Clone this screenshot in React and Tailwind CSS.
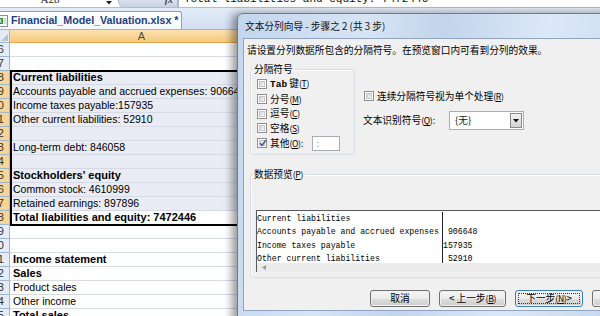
import React from "react";

const rows = [
  { n: 16, t: "" },
  { n: 17, t: "" },
  { n: 18, t: "Current liabilities", b: true, s: true, f: true },
  { n: 19, t: "Accounts payable and accrued expenses: 906648", s: true, f: true },
  { n: 20, t: "Income taxes payable:157935", s: true, f: true },
  { n: 21, t: "Other current liabilities: 52910", s: true, f: true },
  { n: 22, t: "", s: true, f: true },
  { n: 23, t: "Long-term debt: 846058", s: true, f: true },
  { n: 24, t: "", s: true, f: true },
  { n: 25, t: "Stockholders' equity", b: true, s: true, f: true },
  { n: 26, t: "Common stock: 4610999", s: true, f: true },
  { n: 27, t: "Retained earnings: 897896", s: true, f: true },
  { n: 28, t: "Total liabilities and equity: 7472446", b: true, s: true },
  { n: 29, t: "" },
  { n: 30, t: "" },
  { n: 31, t: "Income statement", b: true },
  { n: 32, t: "Sales", b: true },
  { n: 33, t: "Product sales" },
  { n: 34, t: "Other income" },
  { n: 35, t: "Total sales", b: true },
];

const preview = [
  ["Current liabilities", ""],
  ["Accounts payable and accrued expenses", " 906648"],
  ["Income taxes payable", "157935"],
  ["Other current liabilities", " 52910"],
];

function Check({ checked }) {
  return (
    <span className="relative block w-[10px] h-[10px] shrink-0 border border-[#8e8f8f] bg-white p-[1px]">
      <span className="block w-full h-full border border-[#c4c4c4] bg-gradient-to-br from-[#d4d4d4] to-[#f7f7f7]" />
      {checked && (
        <svg className="absolute left-[1px] top-[0px]" width="8" height="8" viewBox="0 0 8 8">
          <path d="M1.2 4.2 L3.1 6.4 L6.9 1.2" fill="none" stroke="#3550a0" strokeWidth="1.4" />
        </svg>
      )}
    </span>
  );
}

function Acc({ c }) {
  return (
    <span className="text-[8.6px] tracking-[-0.3px]">
      (<span className="underline">{c}</span>)
    </span>
  );
}

function Btn({ children, className, focus }) {
  return (
    <div
      className={
        "h-[17px] rounded-[3px] border p-[1px] shrink-0 " +
        (focus ? "border-[#3c7fb1] " : "border-[#707070] ") +
        className
      }
    >
      <div
        className={
          "w-full h-full rounded-[2px] flex items-center justify-center text-[9.7px] text-black bg-[linear-gradient(#f4f4f4_0%,#ececec_50%,#dedede_50%,#d0d0d0_100%)] " +
          (focus ? "outline outline-1 outline-dotted outline-[#333] -outline-offset-[2px]" : "")
        }
      >
        {children}
      </div>
    </div>
  );
}

export default function App() {
  return (
    <div
      className="relative w-[600px] h-[316px] overflow-hidden bg-white"
      style={{ fontFamily: '"Liberation Sans", Arial, sans-serif' }}
    >
      {/* formula bar */}
      <div className="h-[8px] overflow-hidden bg-white border-b border-[#aebdd0]">
        <div className="flex h-[18px] -mt-[10px] items-center">
          <div
            className="w-[100px] h-full flex items-center justify-center text-[11px] text-[#222]"
            style={{ fontFamily: '"Liberation Serif", serif' }}
          >
            A28
          </div>
          <div className="w-[18px] h-full flex items-end justify-center pb-[3px]">
            <svg width="6" height="4" viewBox="0 0 6 4">
              <polygon points="0,0 6,0 3,3.5" fill="#222" />
            </svg>
          </div>
          <div className="w-[60px] h-full rounded-bl-[7px] border border-[#a6b6cb] bg-gradient-to-b from-[#eef2f8] to-[#c8d4e4] flex items-center justify-end pr-[4px]">
            <span className="italic font-bold text-[10px] text-[#444]" style={{ fontFamily: '"Liberation Serif", serif' }}>
              fx
            </span>
          </div>
          <div
            className="flex-1 h-full flex items-center pl-[5px] text-[11px] text-[#111] border-l border-[#a6b6cb] whitespace-nowrap"
            style={{ fontFamily: '"Liberation Mono", monospace' }}
          >
            Total liabilities and equity: 7472446
          </div>
        </div>
      </div>

      {/* tab bar */}
      <div className="h-[22px] bg-gradient-to-b from-[#e3ecf8] to-[#d2dff1] flex items-end border-b border-[#9eb6ce]">
        <div className="h-[18px] w-[182px] bg-gradient-to-b from-white to-[#f3f7fc] border-t border-r border-[#8aa2c6] rounded-tr-[3px] flex items-center">
          <svg className="-ml-[3px] mr-[3px]" width="11" height="12" viewBox="0 0 11 12">
            <rect x="1.5" y="0.5" width="9" height="11" fill="#fff" stroke="#8a8f99" />
            <rect x="0" y="3" width="6" height="6" fill="#2f8a3c" />
            <path d="M1.5 4 L4.5 8 M4.5 4 L1.5 8" stroke="#fff" strokeWidth="1" />
            <path d="M7 4 H9.5 M7 6 H9.5 M7 8 H9.5" stroke="#7fb27f" strokeWidth="0.8" />
          </svg>
          <span className="font-bold text-[10.7px] text-[#1d3f7d] whitespace-nowrap">Financial_Model_Valuation.xlsx *</span>
        </div>
      </div>

      {/* column headers */}
      <div className="flex h-[13px]">
        <div className="relative w-[10px] h-full bg-[#e4ecf7] border-r border-b border-[#9eb6ce]">
          <svg className="absolute right-[1px] bottom-[1px]" width="7" height="7" viewBox="0 0 7 7">
            <polygon points="7,0 7,7 0,7" fill="#b6c2d2" />
          </svg>
        </div>
        <div className="w-[264px] h-full bg-gradient-to-b from-[#fbe2b0] to-[#f5c97c] border-r border-b border-[#e9a54c] flex items-center justify-center text-[11px] text-[#4a4a4a]">
          A
        </div>
        <div className="flex-1 h-full bg-gradient-to-b from-[#f1f5fb] to-[#dde7f3] border-b border-[#9eb6ce]" />
      </div>

      {/* rows */}
      <div className="relative">
        {rows.map((r) => (
          <div key={r.n} className="flex h-[14px]">
            <div
              className={
                "w-[10px] h-full overflow-hidden flex items-center justify-end pr-[5px] text-[11px] text-[#333] border-r border-b border-[#9eb6ce] " +
                (r.s ? "bg-[#f7d596]" : "bg-[#e4ecf7]")
              }
            >
              {r.n}
            </div>
            <div
              className={
                "w-[264px] h-full flex items-center pl-[3px] text-black whitespace-nowrap border-r border-b " +
                (r.f ? "bg-[#e9ecf4] border-[#d5dae5]" : "bg-white border-[#d6dbe4]") +
                (r.b ? " font-bold text-[11px]" : " text-[10.5px]")
              }
            >
              {r.t}
            </div>
            <div className="flex-1 h-full bg-white border-b border-[#d6dbe4]" />
          </div>
        ))}
        <div className="absolute left-[10px] top-[27px] w-[300px] h-[156px] border-2 border-black pointer-events-none" />
      </div>

      {/* dialog */}
      <div
        className="absolute left-[237px] top-[13px] w-[380px] h-[320px] rounded-tl-[6px] border border-[#6b7d97] pl-[5px] flex flex-col shadow-[-5px_0_8px_rgba(0,0,0,0.4)] bg-[linear-gradient(100deg,#c3d6ee_0%,#d7e4f5_30%,#c2d5ec_48%,#dce8f7_72%,#c6d8ee_100%)]"
        style={{ fontFamily: '"Noto Sans CJK SC", "Liberation Sans", sans-serif' }}
      >
        <div className="relative h-[24px] shrink-0 flex items-center pl-[2px] text-[9.7px] text-[#111] whitespace-nowrap">
          文本分列向导 - 步骤之 2 (共 3 步)
          <div className="absolute left-[359px] top-[1px] w-[40px] h-[17px] rounded-b-[4px] border border-[#7a8ba3] bg-gradient-to-b from-[#e8eef7] to-[#b9cbe3]" />
        </div>
        <div className="h-[273px] shrink-0 border border-[#8fa4c1] bg-[#f0f0f0] flex flex-col text-[9.7px] text-black">
          <div className="mt-[5px] pl-[3px] h-[12px] leading-[12px] whitespace-nowrap">
            请设置分列数据所包含的分隔符号。在预览窗口内可看到分列的效果。
          </div>

          <div className="flex mt-[13px] items-start">
            <div className="relative ml-[6px] w-[105px] h-[86px] shrink-0 rounded-[3px] border border-[#d5dfe5] shadow-[inset_1px_1px_0_#fff] pt-[7px] pl-[6px] flex flex-col">
              <div className="absolute left-[2px] -top-[7px] px-[1px] bg-[#f0f0f0] leading-[12px]">分隔符号</div>
              {[
                [<><span style={{ fontFamily: '"Liberation Mono", monospace' }} className="text-[9.5px] font-bold">Tab</span> 键</>, "T", false],
                ["分号", "M", false],
                ["逗号", "C", false],
                ["空格", "S", false],
                ["其他", "O", true],
              ].map(([label, acc, ch], i) => (
                <div key={i} className="h-[14.7px] flex items-center gap-[3px] whitespace-nowrap">
                  <Check checked={ch} />
                  <span>
                    {label}
                    <Acc c={acc} />
                    {ch ? ":" : ""}
                  </span>
                  {ch && (
                    <div className="ml-[6px] w-[28px] h-[15px] border border-[#abadb3] bg-white flex items-center pl-[3px] text-[#888]">
                      :
                    </div>
                  )}
                </div>
              ))}
            </div>

            <div className="ml-[9px] pt-[20px] flex flex-col">
              <div className="h-[14px] flex items-center gap-[3px] whitespace-nowrap">
                <Check />
                <span>
                  连续分隔符号视为单个处理
                  <Acc c="R" />
                </span>
              </div>
              <div className="mt-[8px] flex items-center -ml-[1px]">
                <div className="w-[86px] whitespace-nowrap">
                  文本识别符号<Acc c="Q" />:
                </div>
                <div className="w-[75px] h-[19px] border border-[#abadb3] bg-white flex items-center justify-between pl-[5px] pr-[1px]">
                  <span className="text-[#222]">{"{无}"}</span>
                  <div className="w-[12px] h-[15px] border border-[#8a8a8a] bg-gradient-to-b from-[#f3f3f3] to-[#d2d2d2] flex items-center justify-center">
                    <svg width="6" height="4" viewBox="0 0 6 4">
                      <polygon points="0,0 6,0 3,3.5" fill="#111" />
                    </svg>
                  </div>
                </div>
              </div>
            </div>
          </div>

          <div className="relative ml-[6px] mt-[19px] w-[400px] h-[104px] shrink-0 rounded-[3px] border border-[#d5dfe5] shadow-[inset_1px_1px_0_#fff] pt-[35px] pl-[5px]">
            <div className="absolute left-[2px] -top-[7px] px-[1px] bg-[#f0f0f0] leading-[12px]">
              数据预览<Acc c="P" />
            </div>
            <div className="border-t border-l border-[#5a5a5a] bg-white">
              <div className="h-[52px] overflow-hidden pt-[1px]" style={{ fontFamily: '"Liberation Mono", monospace' }}>
                <div className="flex">
                  <div className="w-[186px] shrink-0 border-r border-[#222]">
                    {preview.map((p, i) => (
                      <div key={i} className="h-[13.3px] leading-[13.3px] text-[8.2px] whitespace-pre text-black">
                        {p[0]}
                      </div>
                    ))}
                  </div>
                  <div>
                    {preview.map((p, i) => (
                      <div key={i} className="h-[13.3px] leading-[13.3px] text-[8.2px] whitespace-pre text-black">
                        {p[1]}
                      </div>
                    ))}
                  </div>
                </div>
              </div>
              <div className="h-[9px] bg-[#ececec] flex items-center pl-[5px]">
                <svg width="4" height="5" viewBox="0 0 4 5">
                  <polygon points="4,0 4,5 0,2.5" fill="#9a9a9a" />
                </svg>
              </div>
            </div>
          </div>

          <div className="mt-[12px] ml-[126px] flex gap-[9px]">
            <Btn className="w-[60px]">取消</Btn>
            <Btn className="w-[67px]">
              &lt; 上一步<Acc c="B" />
            </Btn>
            <Btn className="w-[68px]" focus>
              下一步<Acc c="N" /> &gt;
            </Btn>
            <Btn className="w-[60px]">完成</Btn>
          </div>
        </div>
      </div>
    </div>
  );
}
